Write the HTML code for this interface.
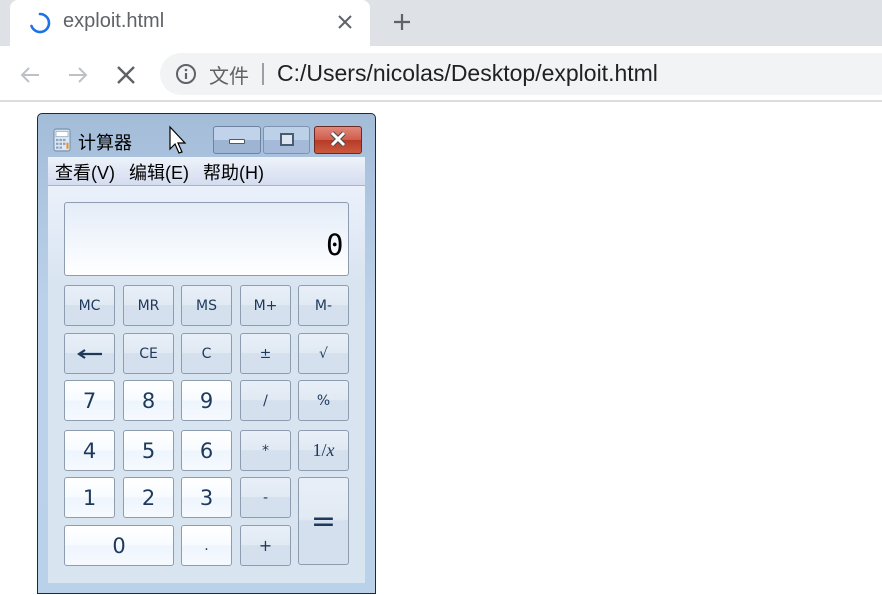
<!DOCTYPE html>
<html><head><meta charset="utf-8"><style>
*{margin:0;padding:0;box-sizing:border-box}
body{width:882px;height:595px;overflow:hidden;background:#fff;position:relative;font-family:"Liberation Sans","Noto Sans CJK SC",sans-serif}
.a{position:absolute}
.tabbar{left:0;top:0;width:882px;height:46px;background:#dee1e6}
.tab{left:10px;top:0;width:360px;height:46px;background:#fff;border-radius:8px 8px 0 0}
.omni{left:160px;top:53px;width:740px;height:42px;background:#f1f3f4;border-radius:21px}
.btn{position:absolute;width:51px;height:41px;border:1px solid #8e9cb0;border-radius:3px;display:flex;align-items:center;justify-content:center;color:#1e395b;font-family:"DejaVu Sans","Liberation Sans",sans-serif}
.f{background:linear-gradient(#e8eff8 0%,#e1e9f3 48%,#d4e0ee 50%,#d4e0ee 100%);font-size:14px}
.n{background:linear-gradient(#ffffff 0%,#f7fbff 48%,#eef5fd 52%,#f6faff 100%);font-size:21px}
</style></head><body>
<div class="a tabbar"></div>
<div class="a tab"></div>
<svg class="a" style="left:28px;top:11px" width="24" height="24" viewBox="0 0 24 24"><path d="M12 3 A9 9 0 1 1 3.5 15" fill="none" stroke="#1a73e8" stroke-width="2.6" stroke-linecap="round"/></svg>
<div class="a" style="left:63px;top:10px;font-size:20px;color:#5f6368">exploit.html</div>
<svg class="a" style="left:337px;top:14px" width="16" height="16" viewBox="0 0 16 16"><path d="M2 2L14 14M14 2L2 14" stroke="#5f6368" stroke-width="2"/></svg>
<svg class="a" style="left:392px;top:12px" width="20" height="20" viewBox="0 0 20 20"><path d="M10 2V18M2 10H18" stroke="#5f6368" stroke-width="2.2"/></svg>
<svg class="a" style="left:18px;top:63px" width="24" height="24" viewBox="0 0 24 24"><path d="M21 12H4M11 5L4 12L11 19" fill="none" stroke="#bdc1c6" stroke-width="2"/></svg>
<svg class="a" style="left:66px;top:63px" width="24" height="24" viewBox="0 0 24 24"><path d="M3 12H20M13 5L20 12L13 19" fill="none" stroke="#bdc1c6" stroke-width="2"/></svg>
<svg class="a" style="left:114px;top:63px" width="24" height="24" viewBox="0 0 24 24"><path d="M4 4L20 20M20 4L4 20" stroke="#5f6368" stroke-width="2.4"/></svg>
<div class="a omni"></div>
<svg class="a" style="left:175px;top:63px" width="22" height="22" viewBox="0 0 22 22"><circle cx="11" cy="11" r="9" fill="none" stroke="#5f6368" stroke-width="2"/><path d="M11 10V16" stroke="#5f6368" stroke-width="2.2"/><circle cx="11" cy="7" r="1.3" fill="#5f6368"/></svg>
<div class="a" style="left:209px;top:60px;font-size:20px;color:#5f6368">文件</div>
<div class="a" style="left:262px;top:63px;width:2px;height:22px;background:#9aa0a6"></div>
<div class="a" style="left:277px;top:60px;font-size:23px;color:#202124;white-space:nowrap">C:/Users/nicolas/Desktop/exploit.html</div>
<div class="a" style="left:0;top:100px;width:882px;height:2px;background:#dadce0"></div>

<div class="a" style="left:37px;top:113px;width:339px;height:481px;border:1px solid #1d2a3a;border-radius:5px 5px 0 0;background:linear-gradient(#a3bcd8,#bcd2ea 40%,#bad1ea)"></div>
<svg class="a" style="left:53px;top:128px" width="18" height="24" viewBox="0 0 18 22" preserveAspectRatio="none"><rect x="1" y="1" width="16" height="20" rx="2" fill="#dfe8f2" stroke="#6f8caa"/><rect x="3" y="3" width="12" height="5" fill="#fff" stroke="#7a95b2" stroke-width=".6"/><g fill="#8aa4c0"><rect x="3" y="10" width="2.5" height="2"/><rect x="6.5" y="10" width="2.5" height="2"/><rect x="10" y="10" width="2.5" height="2"/><rect x="3" y="13.5" width="2.5" height="2"/><rect x="6.5" y="13.5" width="2.5" height="2"/><rect x="10" y="13.5" width="2.5" height="2"/><rect x="3" y="17" width="2.5" height="2"/><rect x="6.5" y="17" width="2.5" height="2"/></g><rect x="13.5" y="13.5" width="2" height="5.5" fill="#f08c1c"/></svg>
<div class="a" style="left:78px;top:129px;font-size:18px;color:#000">计算器</div>
<svg class="a" style="left:168px;top:125px" width="22" height="30" viewBox="0 0 22 30"><path d="M2 2V24L7 19L11 28L14 27L10 18H17Z" fill="#fff" stroke="#000" stroke-width="1.2"/></svg>
<div class="a" style="left:213px;top:126px;width:48px;height:28px;border:1px solid #6d83a0;border-radius:3px;background:linear-gradient(#c0d3ea 50%,#9db4d2 50%)"></div>
<div class="a" style="left:229px;top:139px;width:16px;height:5px;background:#fff;border:1px solid #4c5c70;border-radius:1px"></div>
<div class="a" style="left:263px;top:126px;width:47px;height:28px;border:1px solid #7d93b0;border-radius:3px;background:linear-gradient(#bcd0e8 50%,#a4bad8 50%)"></div>
<div class="a" style="left:280px;top:133px;width:14px;height:13px;border:2px solid #4c5c70;background:#dde6f0"></div>
<div class="a" style="left:314px;top:126px;width:48px;height:28px;border:1px solid #6b2a22;border-radius:3px;background:linear-gradient(#e0877a,#cf5d4c 50%,#b83a26 50%,#c85a40)"></div>
<svg class="a" style="left:329px;top:131px" width="18" height="16" viewBox="0 0 18 16"><path d="M3 2L15 14M15 2L3 14" stroke="#4a4a4a" stroke-width="5"/><path d="M3 2L15 14M15 2L3 14" stroke="#fff" stroke-width="3"/></svg>
<div class="a" style="left:48px;top:157px;width:317px;height:29px;background:linear-gradient(#eef3fa,#d4dcef);border-bottom:1px solid #a8b4c8"></div>
<div class="a" style="left:55px;top:159px;font-size:18px;color:#000;word-spacing:9px;white-space:nowrap">查看(V) 编辑(E) 帮助(H)</div>
<div class="a" style="left:48px;top:186px;width:317px;height:397px;background:linear-gradient(#eaf1fb,#d9e4f1 25%,#d9e4f1)"></div>
<div class="a" style="left:64px;top:202px;width:285px;height:74px;border:1px solid #8e9cb0;border-radius:3px;background:linear-gradient(#e4ecf7,#f4f8fd 60%,#fff)"></div>
<div class="a" style="left:326px;top:228px;font-size:29px;font-family:'DejaVu Sans Mono',monospace;color:#000">0</div>

<div class="btn f" style="left:64px;top:285px">MC</div>
<div class="btn f" style="left:123px;top:285px">MR</div>
<div class="btn f" style="left:181px;top:285px">MS</div>
<div class="btn f" style="left:240px;top:285px">M+</div>
<div class="btn f" style="left:298px;top:285px">M-</div>
<div class="btn f" style="left:64px;top:333px"><svg width="26" height="10" viewBox="0 0 26 10"><path d="M25 5H4M8 1L2 5L8 9" fill="none" stroke="#1e395b" stroke-width="2.2"/></svg></div>
<div class="btn f" style="left:123px;top:333px">CE</div>
<div class="btn f" style="left:181px;top:333px">C</div>
<div class="btn f" style="left:240px;top:333px">±</div>
<div class="btn f" style="left:298px;top:333px">√</div>
<div class="btn n" style="left:64px;top:380px">7</div>
<div class="btn n" style="left:123px;top:380px">8</div>
<div class="btn n" style="left:181px;top:380px">9</div>
<div class="btn f" style="left:240px;top:380px">/</div>
<div class="btn f" style="left:298px;top:380px">%</div>
<div class="btn n" style="left:64px;top:430px">4</div>
<div class="btn n" style="left:123px;top:430px">5</div>
<div class="btn n" style="left:181px;top:430px">6</div>
<div class="btn f" style="left:240px;top:430px">*</div>
<div class="btn f" style="left:298px;top:430px;font-family:'Liberation Serif',serif;font-size:18px">1/<i>x</i></div>
<div class="btn n" style="left:64px;top:477px">1</div>
<div class="btn n" style="left:123px;top:477px">2</div>
<div class="btn n" style="left:181px;top:477px">3</div>
<div class="btn f" style="left:240px;top:477px">-</div>
<div class="btn f" style="left:298px;top:477px;height:88px;font-size:30px">=</div>
<div class="btn n" style="left:64px;top:525px;width:110px">0</div>
<div class="btn n" style="left:181px;top:525px;font-size:14px">.</div>
<div class="btn f" style="left:240px;top:525px;font-size:16px">+</div>
</body></html>
